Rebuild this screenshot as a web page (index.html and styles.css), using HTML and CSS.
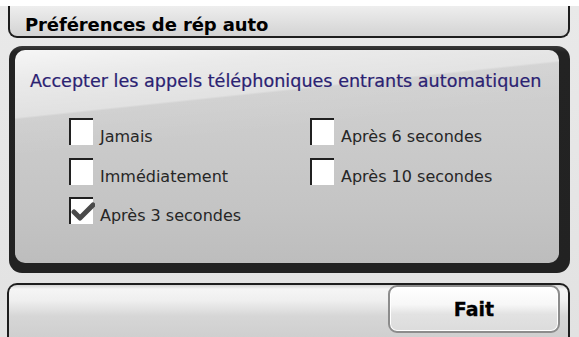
FILE: index.html
```html
<!DOCTYPE html>
<html lang="fr">
<head>
<meta charset="utf-8">
<title>Préférences de rép auto</title>
<link rel="stylesheet" href="styles.css">
</head>
<body>
<div class="screen">
  <div class="titlebar"><span class="title">Préférences de rép auto</span></div>
  <div class="panel">
    <div class="panel-inner">
      <p class="prompt">Accepter les appels téléphoniques entrants automatiquen</p>
      <div class="options">
        <div class="option"><span class="box"></span><span class="label">Jamais</span></div>
        <div class="option"><span class="box"></span><span class="label">Après 6 secondes</span></div>
        <div class="option"><span class="box"></span><span class="label">Immédiatement</span></div>
        <div class="option"><span class="box"></span><span class="label">Après 10 secondes</span></div>
        <div class="option"><span class="box checked"><svg class="tick" viewBox="0 0 26 27" width="26" height="27"><polyline points="5,15 11,21 24,8" fill="none" stroke="#4a4a4a" stroke-width="5" stroke-linecap="round" stroke-linejoin="round"/></svg></span><span class="label">Après 3 secondes</span></div>
      </div>
    </div>
  </div>
  <div class="footer">
    <button class="done">Fait</button>
  </div>
</div>
</body>
</html>
```

FILE: styles.css
```css
html, body {
  margin: 0;
  padding: 0;
}
body {
  width: 579px;
  height: 337px;
  overflow: hidden;
  background: linear-gradient(to bottom, #ffffff 0, #ffffff 6px, #e9e9e9 6px, #e2e2e2 100%);
  font-family: "DejaVu Sans", "Liberation Sans", sans-serif;
}
.screen {
  display: flex;
  flex-direction: column;
  padding: 6px 9px 0 8px;
  height: 331px;
}
.titlebar {
  box-sizing: border-box;
  height: 32px;
  padding: 7px 0 0 15px;
  border: 2px solid #1d1d1d;
  border-top: none;
  border-radius: 0 0 9px 9px;
  background: linear-gradient(to bottom, #eeeeee 0%, #e2e2e2 45%, #d3d3d3 100%);
}
.title {
  display: block;
  font-weight: bold;
  font-size: 18px;
  letter-spacing: -0.1px;
  line-height: 24px;
  color: #000;
}
.panel {
  margin: 8px 0 0 1px;
  height: 227px;
  box-sizing: border-box;
  padding: 4px 11px 10px 6px;
  border-radius: 13px;
  background: linear-gradient(to bottom, #3a3a3a 0, #232323 6px, #222222 100%);
  display: flex;
}
.panel-inner {
  flex: 1;
  border-radius: 10px;
  background:
    linear-gradient(174deg, rgba(255,255,255,0.8) 0%, rgba(255,255,255,0.55) 12%, rgba(255,255,255,0.4) 25%, rgba(255,255,255,0.08) 25.8%, rgba(255,255,255,0) 40%),
    linear-gradient(to bottom, #d2d2d2 0%, #cbcbcb 40%, #c4c4c4 75%, #bdbdbd 100%);
  padding: 20px 0 0 15px;
}
.prompt {
  margin: 0;
  font-size: 17.6px;
  line-height: 22px;
  color: #2b2272;
  white-space: nowrap;
  -webkit-text-stroke: 0.2px #2b2272;
}
.options {
  margin-top: 26px;
  padding-left: 39px;
  display: grid;
  grid-template-columns: 241px 200px;
  grid-auto-rows: 39.5px;
}
.option {
  display: flex;
  align-items: flex-start;
}
.box {
  position: relative;
  box-sizing: border-box;
  width: 24px;
  height: 27px;
  flex: none;
  background: #ffffff;
  border-top: 2px solid #202020;
  border-left: 2px solid #202020;
}
.tick {
  position: absolute;
  left: -2px;
  top: -2px;
}
.label {
  margin-left: 7px;
  padding-top: 9px;
  font-size: 16px;
  line-height: 20px;
  color: #262626;
  white-space: nowrap;
}
.footer {
  margin-top: 10px;
  margin-left: -1px;
  flex: 1;
  display: flex;
  justify-content: flex-end;
  align-items: flex-start;
  padding-right: 8px;
  border: 2px solid #1d1d1d;
  border-bottom: none;
  border-radius: 10px 10px 0 0;
  background: linear-gradient(to bottom, #d4d4d4 0, #f5f5f5 4px, #efefef 30%, #d6d6d6 60%, #cfcfcf 100%);
}
.done {
  box-sizing: border-box;
  width: 172px;
  height: 48px;
  margin: 0;
  border: 2px solid #8c8c8c;
  border-radius: 9px;
  background: linear-gradient(to bottom, #ffffff 0%, #f7f7f7 40%, #e2e2e2 62%, #dcdcdc 100%);
  box-shadow: inset 0 0 0 1px #ffffff;
  font-family: "DejaVu Sans", "Liberation Sans", sans-serif;
  font-weight: bold;
  font-size: 19px;
  color: #000;
  padding: 0;
  -webkit-text-stroke: 0.3px #000;
  cursor: pointer;
}
```
